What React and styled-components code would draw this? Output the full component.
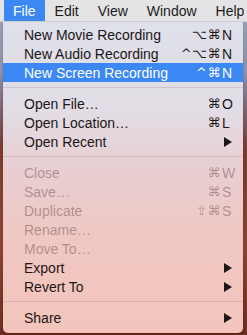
import React from 'react';
import styled, { createGlobalStyle } from 'styled-components';

const GlobalStyle = createGlobalStyle`
    html, body {
        margin: 0;
        padding: 0;
        width: 247px;
        height: 335px;
        overflow: hidden;
    }
`;

const Desktop = styled.div`
    width: 247px;
    height: 335px;
    overflow: hidden;
    background:
        radial-gradient(circle at 30% 60%, rgba(160, 70, 50, 0.6), transparent 40%),
        linear-gradient(180deg, #9da3b8 0px, #8f92a8 70px, #7d5c6a 115px, #7a3a2c 150px, #8a4331 250px, #6e2c20 335px);
    font-family: "Liberation Sans", Arial, sans-serif;
    font-size: 14px;
    display: flex;
    flex-direction: column;
`;

const MenuBar = styled.div`
    height: 22px;
    flex: none;
    display: flex;
    align-items: stretch;
    padding-left: 4px;
    background: #e4e4e7;
    border-bottom: 1px solid #cfd0d6;
    box-sizing: border-box;
    white-space: nowrap;
`;

const BarItem = styled.div`
    padding: 0 9px 0 9px;
    display: flex;
    align-items: center;
    color: ${p => (p.$active ? '#fff' : '#1b1b1b')};
    background: ${p => (p.$active ? '#3b87f4' : 'transparent')};
    margin-right: 1px;
`;

const Panel = styled.div`
    margin: 0 4px 0 3px;
    padding: 3px 0 6px;
    border-radius: 0 0 5px 5px;
    background: linear-gradient(180deg, #dee0ea 0%, #e2dde5 28%, #e8ced1 48%, #f0c7c2 70%, #f3c5bc 100%);
    box-shadow: 0 1px 2px rgba(0, 0, 0, 0.25);
`;

const Row = styled.div`
    height: 19px;
    display: flex;
    align-items: center;
    padding: 0 6px 0 21px;
    color: ${p => (p.$selected ? '#fff' : p.$disabled ? 'rgba(70, 40, 40, 0.38)' : '#1d1616')};
    background: ${p => (p.$selected ? '#3b87f4' : 'transparent')};
    white-space: nowrap;
`;

const Label = styled.span`
    flex: 1;
`;

const Mods = styled.span`
    font-family: "DejaVu Sans", "Liberation Sans", sans-serif;
    font-size: 13px;
    letter-spacing: 0.5px;
    text-align: right;
    padding-right: 1px;
`;

const Key = styled.span`
    width: 15px;
    text-align: left;
`;

const Arrow = styled.svg`
    width: 15px;
    height: 10px;
    display: block;
`;

const Separator = styled.div`
    height: 1px;
    margin: 5px 0 6px;
    background: rgba(90, 60, 70, 0.14);
`;

const items = [
    { label: 'New Movie Recording', mods: '⌥⌘', key: 'N' },
    { label: 'New Audio Recording', mods: '^⌥⌘', key: 'N' },
    { label: 'New Screen Recording', mods: '^⌘', key: 'N', selected: true },
    'sep',
    { label: 'Open File…', mods: '⌘', key: 'O' },
    { label: 'Open Location…', mods: '⌘', key: 'L' },
    { label: 'Open Recent', sub: true },
    'sep',
    { label: 'Close', mods: '⌘', key: 'W', disabled: true },
    { label: 'Save…', mods: '⌘', key: 'S', disabled: true },
    { label: 'Duplicate', mods: '⇧⌘', key: 'S', disabled: true },
    { label: 'Rename…', disabled: true },
    { label: 'Move To…', disabled: true },
    { label: 'Export', sub: true },
    { label: 'Revert To', sub: true },
    'sep',
    { label: 'Share', sub: true },
];

function MenuRow({ item }) {
    return (
        <Row $selected={item.selected} $disabled={item.disabled}>
            <Label>{item.label}</Label>
            {item.mods && <Mods>{item.mods}</Mods>}
            {item.key && <Key>{item.key}</Key>}
            {item.sub && (
                <Arrow viewBox="0 0 15 10">
                    <path d="M2 0 L10 5 L2 10 Z" fill="#1d1616" />
                </Arrow>
            )}
        </Row>
    );
}

export default function App() {
    return (
        <Desktop>
            <GlobalStyle />
            <MenuBar>
                <BarItem $active>File</BarItem>
                <BarItem>Edit</BarItem>
                <BarItem>View</BarItem>
                <BarItem>Window</BarItem>
                <BarItem>Help</BarItem>
            </MenuBar>
            <Panel>
                {items.map((item, i) =>
                    item === 'sep' ? <Separator key={i} /> : <MenuRow key={i} item={item} />
                )}
            </Panel>
        </Desktop>
    );
}
